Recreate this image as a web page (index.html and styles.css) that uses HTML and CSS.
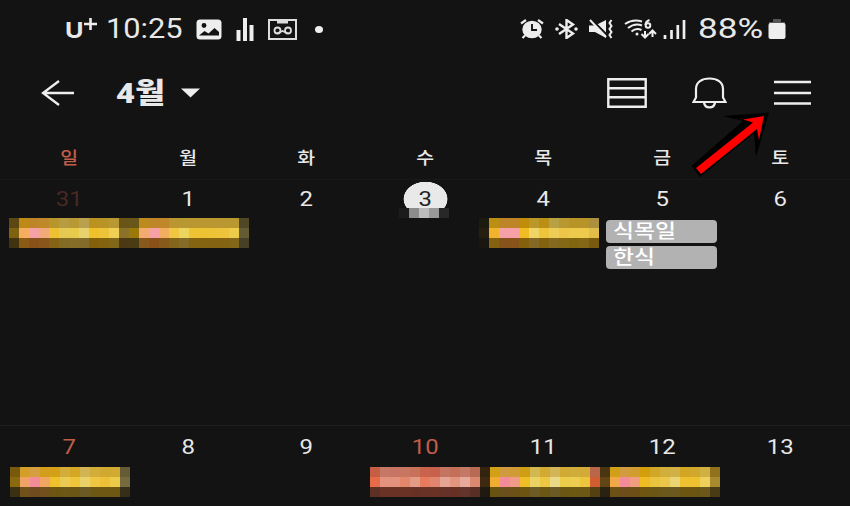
FILE: index.html
```html
<!DOCTYPE html>
<html lang="ko">
  <head>
    <meta charset="UTF-8" />
    <meta name="viewport" content="width=device-width, initial-scale=1.0" />
    <title>4월</title>
    <link rel="stylesheet" href="styles.css">
  </head>
  <body>
    <div class="status-bar">
      <div class="status-left">
        <span class="carrier"><span>U</span></span>
        <svg class="plus" width="13" height="12" viewBox="0 0 13 12"><path d="M6.5 0v12M0 6h13" stroke="#eee" stroke-width="2.6"/></svg>
        <span class="clock"><span>10:25</span></span>
        <svg class="icon-photo" width="26" height="21" viewBox="0 0 26 21">
          <rect x="0.5" y="0.5" width="25" height="20" rx="3.5" fill="#eee"/>
          <circle cx="8" cy="6.5" r="2.4" fill="#131313"/>
          <path d="M3 16.5l5.5-4.5 4 2.5 6-5.5 4.5 4v3.5z" fill="#131313"/>
        </svg>
        <svg class="icon-chart" width="18" height="23" viewBox="0 0 18 23"><path d="M2.5 12v11M9 0v23M15.5 7v16" stroke="#eee" stroke-width="4"/></svg>
        <svg class="icon-tape" width="29" height="21" viewBox="0 0 29 21">
          <path d="M1 1h27v19H1z" fill="none" stroke="#ddd" stroke-width="2"/>
          <path d="M9 2h11v2.5H9z" fill="#ddd"/>
          <g fill="none" stroke="#ddd" stroke-width="1.8"><circle cx="9.5" cy="11.5" r="3"/><circle cx="20" cy="11.5" r="3"/><path d="M9 14.5l5.5-2.500 5.500 2.500"/></g>
        </svg>
        <span class="dot"></span>
      </div>
      <div class="status-right">
        <svg width="24" height="20" viewBox="0 0 24 20">
          <path d="M1 4.5L6 1M23 4.5L18 1M5 16.5L2.5 19M19 16.5l2.5 2.5" stroke="#eee" stroke-width="2.2"/>
          <ellipse cx="12" cy="10.5" rx="9.7" ry="8.8" fill="#eee"/>
          <path d="M12 5v6h5" fill="none" stroke="#131313" stroke-width="1.9"/>
        </svg>
        <svg class="icon-bt" width="23" height="20" viewBox="0 0 23 20">
          <path d="M4 5l14 9.5-6.5 4.5V1L18 5.500 4 15" fill="none" stroke="#eee" stroke-width="2.4"/>
          <circle cx="2" cy="10" r="1.8" fill="#eee"/><circle cx="21" cy="10" r="1.8" fill="#eee"/>
        </svg>
        <svg class="icon-mute" width="24" height="20" viewBox="0 0 24 20">
          <path d="M0 6.5h6L17 1v18L6 13H0z" fill="#eee"/>
          <path d="M2 0l17 17" stroke="#131313" stroke-width="2.2"/>
          <path d="M1 1l16 17" stroke="#eee" stroke-width="2"/>
          <path d="M22.5 1l-2 3 2 3-2 3 2 3-2 3 2 3" fill="none" stroke="#eee" stroke-width="2"/>
        </svg>
        <svg class="icon-wifi" width="33" height="20" viewBox="0 0 33 20">
          <g fill="none" stroke="#eee" stroke-width="2">
            <path d="M1 5Q9-.5 18 2.500M4 9Q11 3.500 18 6.500M7.500 12.500Q12 8.500 17.500 11"/>
            <circle cx="24" cy="6.500" r="2.300"/><path d="M25.500 1Q21.500 2.500 21.500 6"/>
            <path d="M21 12v6M17.500 15l3.500 3.500 3.500-3.500M28.500 18v-6M25 15l3.500-3.500 3.500 3.500"/>
          </g>
          <circle cx="13" cy="15" r="1.500" fill="#eee"/>
        </svg>
        <svg class="icon-signal" width="23" height="19" viewBox="0 0 23 19"><path d="M2 15v4M8.500 10v9M14.800 5v14M21 0v19" stroke="#eee" stroke-width="2.700"/></svg>
        <span class="battery-text"><span>88%</span></span>
        <svg class="icon-battery" width="18" height="20" viewBox="0 0 18 20"><path d="M5 0h8v3h4v3H1V3h4z" fill="#555"/><rect x="0.500" y="4" width="17" height="16" rx="2" fill="#eee"/></svg>
      </div>
    </div>

    <header class="toolbar">
      <svg class="back" width="34" height="28" viewBox="0 0 34 28"><path d="M18 2L2 14l16 12M2 14h31" fill="none" stroke="#eee" stroke-width="2.300"/></svg>
      <h1 class="month"><span>4월</span></h1>
      <svg class="caret" width="19" height="10" viewBox="0 0 19 10"><path d="M0 .5h19L9.500 9.500z" fill="#eee"/></svg>
      <svg class="list-view" width="40" height="30" viewBox="0 0 40 30"><path d="M1.300 1.300h37.400v27.400H1.300zM2 10.300h36M2 19.300h36" fill="none" stroke="#eee" stroke-width="2.400"/></svg>
      <svg class="bell" width="35" height="32" viewBox="0 0 35 32">
        <path d="M1.500 25h32l-2.500-4.500V12C31 5 25 1.500 17.500 1.500S4 5 4 12v8.500z" fill="none" stroke="#eee" stroke-width="2.200"/>
        <path d="M12 25.500c1 6.500 10 6.500 11 0" fill="none" stroke="#eee" stroke-width="2.300"/>
      </svg>
      <svg class="menu" width="37" height="26" viewBox="0 0 37 26"><path d="M0 2h37M0 13h37M0 23.500h37" stroke="#eee" stroke-width="2.300"/></svg>
    </header>

    <div class="weekdays">
      <span class="sun">일</span><span>월</span><span>화</span><span>수</span><span>목</span><span>금</span><span>토</span>
    </div>

    <section class="week">
      <div class="days">
        <span class="sun faded">31</span><span>1</span><span>2</span><span class="today">3</span><span>4</span><span>5</span><span>6</span>
      </div>
      <div class="today-base mosaic" data-mosaic="today"></div>
      <div class="lane">
        <div class="mosaic first" data-mosaic="week1"></div>
        <div class="mosaic thursday" data-mosaic="week1thu"></div>
        <div class="holidays">
          <div class="holiday"><span>식목일</span></div>
          <div class="holiday"><span>한식</span></div>
        </div>
      </div>
    </section>

    <section class="week second">
      <div class="days">
        <span class="sun">7</span><span>8</span><span>9</span><span class="sun">10</span><span>11</span><span>12</span><span>13</span>
      </div>
      <div class="lane">
        <div class="mosaic first" data-mosaic="week2"></div>
        <div class="mosaic rest" data-mosaic="week2rest"></div>
      </div>
    </section>

    <svg class="pointer" width="82" height="68" viewBox="0 0 82 68">
      <path d="M78 1.500L32 5l20 5L.5 55l8.500 11 54-44 2 24z" fill="#000"/>
      <path d="M73 5L52 8.500l10 3L5 57l5 6 56-45 2 11z" fill="#f00"/>
    </svg>
    <script src="script.js"></script>
  </body>
</html>
```

FILE: styles.css
```css
:root {
    --bg: #131313;
    --text: #e8e8e8;
    --sunday: #c05e49;
}
* {
    box-sizing: border-box;
}
body {
    margin: 0;
    width: 850px;
    height: 506px;
    overflow: hidden;
    position: relative;
    background: var(--bg);
    color: var(--text);
    font-family: Roboto, "Noto Sans CJK KR", sans-serif;
}
svg {
    display: block;
    flex: none;
}
.status-bar {
    height: 58px;
    display: flex;
    justify-content: space-between;
    padding: 0 64px 0 65px;
}
.status-left,
.status-right {
    display: flex;
    align-items: center;
}
.carrier {
    width: 18px;
    font: bold 22px/30px Inter, sans-serif;
    padding-top: 2px;
}
.carrier span {
    display: inline-block;
    transform: scaleX(1.15);
    transform-origin: left;
}
.plus {
    margin: -11px 0 0 1px;
}
.clock,
.battery-text {
    font-size: 27px;
    line-height: 30px;
    white-space: nowrap;
}
.clock {
    width: 76px;
    margin-left: 9px;
}
.clock span,
.battery-text span {
    display: inline-block;
    transform: scaleX(1.14);
    transform-origin: left;
}
.battery-text span {
    transform: scaleX(1.3);
}
.icon-photo {
    margin-left: 14px;
}
.icon-chart {
    margin-left: 14px;
}
.icon-tape {
    margin-left: 14px;
}
.dot {
    width: 8px;
    height: 7px;
    margin-left: 18px;
    border-radius: 50%;
    background: #eee;
}
.icon-bt {
    margin-left: 11px;
}
.icon-mute {
    margin-left: 11px;
}
.icon-wifi {
    margin-left: 11px;
}
.icon-signal {
    margin-left: 6px;
}
.battery-text {
    width: 66px;
    margin-left: 12px;
}
.icon-battery {
    margin-left: 4px;
}

.toolbar {
    height: 70px;
    display: flex;
    align-items: center;
    padding: 0 39px 0 41px;
}
.month {
    width: 51px;
    margin: 2px 0 0 41px;
    font-size: 28px;
    font-weight: 900;
    line-height: 40px;
}
.month span {
    display: inline-block;
    transform: scaleX(1.17);
    transform-origin: left;
    white-space: nowrap;
}
.caret {
    margin-left: 14px;
}
.list-view {
    margin-left: auto;
}
.bell {
    margin-left: 45px;
}
.menu {
    margin-left: 47px;
}

.weekdays,
.days {
    display: grid;
    grid-template-columns: repeat(7, 1fr);
    padding: 0 10px;
    text-align: center;
}
.weekdays {
    height: 52px;
    font-size: 17px;
    font-weight: 500;
    line-height: 60px;
    border-bottom: 1px solid #191919;
}
.weekdays span {
    height: 51px;
    transform: scaleX(1.14);
}
.week {
    height: 245px;
}
.days {
    height: 38px;
    font-size: 21px;
    line-height: 38px;
}
.days span {
    transform: scaleX(1.14);
}
.sun {
    color: var(--sunday);
}
.faded {
    color: #4a2923;
}
.days .today {
    color: #222;
    background: radial-gradient(ellipse 19.5px 17.5px at 50% 19px, #e9e9e9 97%, transparent 100%);
}
.today-base {
    height: 10px;
    margin: -10px 0 0 399px;
    position: relative;
}
.lane {
    display: flex;
    align-items: flex-start;
}
.mosaic {
    display: grid;
    grid-auto-rows: 10px;
}
.first {
    margin-left: 9px;
}
.thursday {
    margin-left: 230px;
}
.holidays {
    display: flex;
    flex-direction: column;
    gap: 3px;
    margin: 2px 0 0 7px;
}
.holiday {
    width: 111px;
    height: 23px;
    padding-left: 7px;
    border-radius: 4px;
    background: #b2b2b2;
    color: #fff;
    font-size: 19px;
    font-weight: 500;
    line-height: 24px;
}
.holiday span {
    display: inline-block;
    transform: scaleX(1.2);
    transform-origin: left;
}
.second {
    height: 81px;
    border-top: 1px solid #1e1e1e;
}
.second .days {
    height: 41px;
    line-height: 43px;
}
.second .first {
    margin-left: 10px;
}
.rest {
    margin-left: 240px;
}
/* red arrow laid over the toolbar and the weekday row */
.pointer {
    position: absolute;
    left: 691px;
    top: 111px;
}
```

FILE: script.js
```js
// one string per row of 10px cells
const mosaics = {
  today: ["1c1c1c 8c8c8c bcbcbc 9a9a9a 282828"],
  week1: [
    "5c4812 bd8a18 bd8528 bf8829 b8962c b79d40 b79833 b8a04e bb9220 b89325 b89832 6a5518 695719 bd8b1d be8529 bf8729 bb9630 b89830 ba9731 b99831 ba9731 b99831 b99830 504727",
    "80610f f5ae60 f6a0a7 f2aa7b edc132 e5c953 e7c94c e8d26e efc02b edc33a efcf55 8b7228 9b7909 f3ab72 f5a1a6 f3ad61 efc742 edd45f eec334 edc333 edc438 edc43c edcc4c 655b32",
    "413310 8b5b15 8a5019 88551b 846414 846a22 856d27 836b2b 84600b 84620e 816719 4a3912 493c14 88591c 895119 87591b 81661b 846c28 846411 846410 846410 846312 816717 464026"
  ],
  week1thu: [
    "1c1b10 bb9012 bd8528 bd8528 bf8d0a b99729 bb8e14 b8a044 b89931 b89325 b89328 ab9040",
    "261e10 f0b32c f6a0a7 f6a0a7 f1bb24 efd466 edc43c edcd57 edc548 edca4c edca4c e1bd49",
    "1a1711 84620f 88531a 88531a 85600c 846925 83620f 84691f 846717 83640f 846717 785b0e"
  ],
  week2: [
    "79590d d49f28 d59e3e d39e1c d3a017 d3ac39 d3a724 d2b452 d2ad39 d2a930 d2aa32 655b34",
    "8b6a0d f1a267 f48b98 f0a562 efc12c ebcb51 efc63b e9d268 edc743 edc038 eccb4a 766b3e",
    "3b3011 71511a 714b20 71501d 6d5611 6d5717 6c5615 6c5a25 6d5714 6d5712 6d5713 352e18"
  ],
  week2rest: [
    "c65e43 c77765 c77462 c87661 c7705a c9634b c7614b c37561 c46f57 c47967 b86a55 33230f d1a014 d09b3c d09b34 d09e14 d1b850 d1a933 d1b556 d1aa35 d0ad3b d1ab36 b9664b 493611 d2a018 d29b40 d29c2e d29e0c d1a725 d2af3a d1b046 d2a623 d1a82b d1b043 92711d",
    "e56b49 e3937d e3937d e3866c e39a86 e67b5d e2856e e6a594 e3967f e6ab9a db8870 3d2a10 f0ad31 f48b98 f29a8a efbd26 ead264 edc642 ead987 eccd4b eece51 ecc43e d25d30 624514 f2a749 f48b98 f19e80 efbc23 ebc43f ecc84a ead473 edc130 edc130 eed05a a98a2e",
    "5e2f25 693225 693225 6a3125 693126 693226 693225 663227 673025 643329 592f25 20190f 6a5310 6c501b 6c5018 6d5511 6d5a25 6b5714 6c5a26 6b5713 6c5810 6c5714 544011 2a2110 6d5015 6e4d1b 6e4e17 6e5510 6b5616 6b581a 6b581f 6c5510 6c5513 6c581a 493b14"
  ]
};

document.querySelectorAll("[data-mosaic]").forEach((el) => {
  const rows = mosaics[el.dataset.mosaic].map((row) => row.split(" "));
  el.style.gridTemplateColumns = `repeat(${rows[0].length}, 10px)`;
  rows.flat().forEach((color) => {
    const cell = document.createElement("i");
    cell.style.background = "#" + color;
    el.appendChild(cell);
  });
});
```
